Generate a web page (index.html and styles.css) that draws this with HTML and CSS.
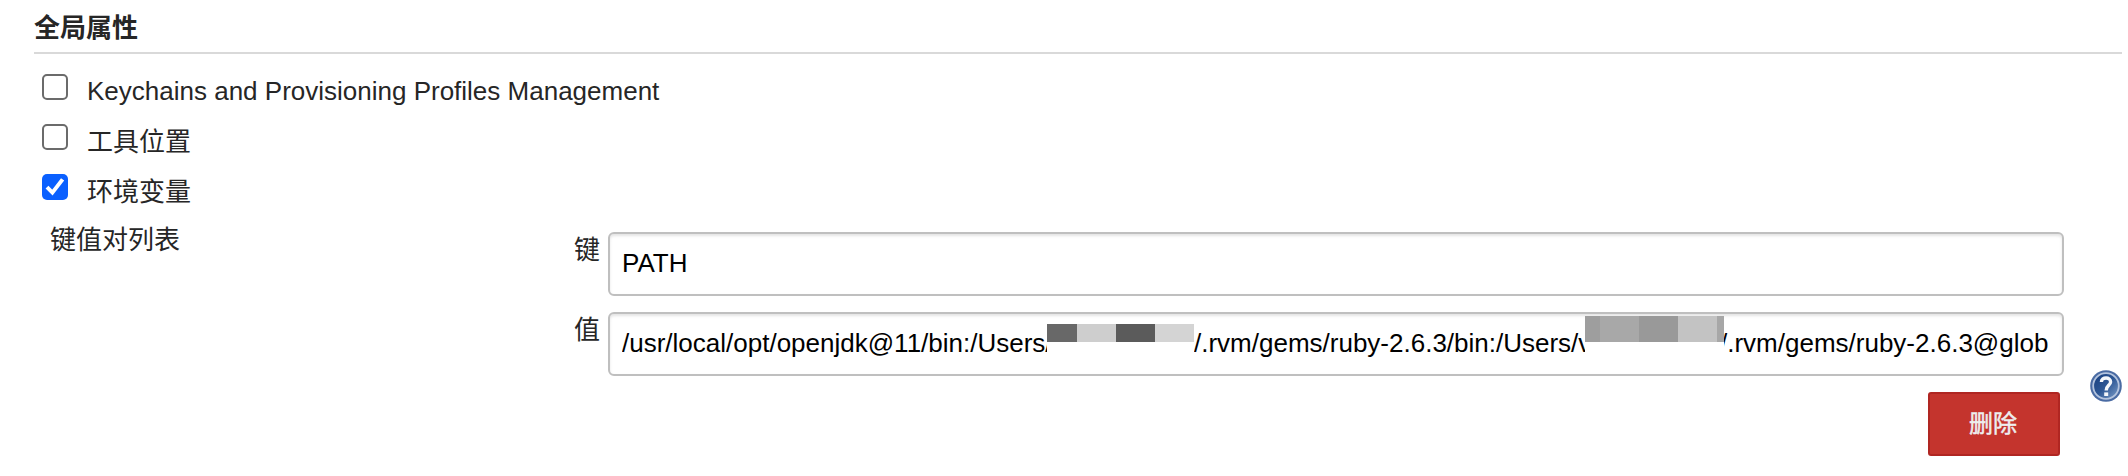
FILE: index.html
```html
<!DOCTYPE html>
<html lang="zh-CN">
<head>
<meta charset="utf-8">
<title>全局属性</title>
<link rel="stylesheet" href="styles.css">
</head>
<body>
<main class="section">
  <h2 class="section-title">全局属性</h2>
  <div class="options">
    <label class="option"><span class="box"></span><span class="option-text">Keychains and Provisioning Profiles Management</span></label>
    <label class="option"><span class="box"></span><span class="option-text cjk">工具位置</span></label>
    <label class="option"><span class="box checked"><svg viewBox="0 0 26 26"><path d="M5 13.2 10.4 18.6 20.6 5.4" fill="none" stroke="#fff" stroke-width="4"/></svg></span><span class="option-text cjk">环境变量</span></label>
  </div>
  <div class="env">
    <div class="env-name">键值对列表</div>
    <div class="pairs">
      <div class="pair">
        <span class="pair-label">键</span>
        <div class="field">PATH</div>
      </div>
      <div class="pair">
        <span class="pair-label">值</span>
        <div class="field">
          <span class="part part-a">/usr/local/opt/openjdk@11/bin:/Users/</span>
          <span class="mask mask-a"></span>
          <span class="part part-b">/.rvm/gems/ruby-2.6.3/bin:/Users/v</span>
          <span class="mask mask-b"></span>
          <span class="part part-c"><span class="shift">/.rvm/gems/ruby-2.6.3@glob</span></span>
        </div>
      </div>
      <button class="delete" type="button">删除</button>
    </div>
    <svg class="help" viewBox="0 0 32 32">
      <defs>
        <linearGradient id="disc" x1="0" y1="0" x2="1" y2="1">
          <stop offset="0" stop-color="#173c7c"/>
          <stop offset=".5" stop-color="#2d5795"/>
          <stop offset="1" stop-color="#7f9fca"/>
        </linearGradient>
      </defs>
      <circle cx="16" cy="16" r="15.8" fill="#4a6ba3"/>
      <circle cx="16" cy="16" r="12.8" fill="url(#disc)" stroke="#b4c4de" stroke-width="1.8"/>
      <path d="M11.4 12C11.4 6.6 20.8 6.6 20.6 12C20.5 15.4 16.2 15.4 16.2 20.4" fill="none" stroke="#f4f7fb" stroke-width="3.4"/>
      <rect x="14.2" y="22.4" width="4" height="3.6" fill="#f4f7fb"/>
    </svg>
  </div>
</main>
</body>
</html>
```
FILE: styles.css
```css
* { box-sizing: border-box; }

body {
  margin: 0;
  background: #fff;
  color: #262626;
  font: 26px/30px "Liberation Sans", "Noto Sans CJK SC", sans-serif;
}

.section { padding: 0 6px 0 34px; }

.section-title {
  height: 54px;
  margin: 0;
  padding-top: 13px;
  border-bottom: 2px solid #d9d9d9;
  font-size: 26px;
  font-weight: 700;
  line-height: 30px;
}

.options {
  display: flex;
  flex-direction: column;
  padding: 20px 0 0 8px;
}

.option {
  display: flex;
  gap: 19px;
  height: 50px;
}

.box {
  width: 26px;
  height: 26px;
  border: 2px solid #6b6b6b;
  border-radius: 5px;
}

.checked {
  border: 0;
  background: #0a60ff;
}

.checked svg { display: block; }

.option-text {
  padding-top: 2px;
  white-space: nowrap;
}

.option-text.cjk { padding-top: 3px; }

.env {
  display: flex;
  height: 240px;
}

.env-name {
  width: 540px;
  padding: 1px 0 0 16px;
}

.pairs {
  display: flex;
  flex-direction: column;
  gap: 16px;
  width: 1490px;
  padding-top: 8px;
}

.pair { display: flex; }

.pair-label {
  width: 34px;
  padding-top: 3px;
}

.field {
  display: flex;
  width: 1456px;
  height: 64px;
  padding: 0 12px;
  border: 2px solid #bfbfbf;
  border-radius: 6px;
  box-shadow: inset 0 2px 3px #e4e4e4;
  color: #000;
  line-height: 58px;
  white-space: nowrap;
}

.part {
  overflow: hidden;
  flex: none;
}

.part-a { width: 425px; }
.part-b { width: 391px; }
.part-c { width: 326px; }
.shift { margin-left: -4px; }

.mask { flex: none; }

.mask-a {
  width: 147px;
  height: 18px;
  margin-top: 10px;
  background: linear-gradient(90deg, #686868 30.5px, #cecece 30.5px 69.5px, #5b5b5b 69.5px 108.5px, #d4d4d4 108.5px);
}

.mask-b {
  width: 139px;
  height: 26px;
  margin-top: 2px;
  background: linear-gradient(90deg, #9e9e9e 15px, #a8a8a8 15px 54px, #999 54px 93px, #c3c3c3 93px 132px, #a7a7a7 132px);
}

.delete {
  align-self: flex-end;
  width: 132px;
  height: 64px;
  margin-right: 4px;
  padding: 0 2px 0 0;
  border: 2px solid #b02622;
  border-radius: 3px;
  background: #c4342d;
  color: #eee;
  font: 24px/56px "Liberation Sans", "Noto Sans CJK SC", sans-serif;
  -webkit-text-stroke: .5px #eee;
}

.help {
  width: 32px;
  height: 32px;
  margin: 146px 0 0 26px;
}
```
